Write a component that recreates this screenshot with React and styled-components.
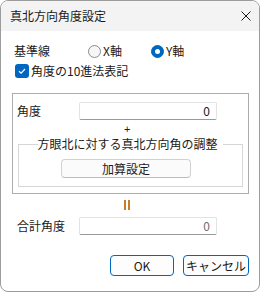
import React from "react";
import styled, { createGlobalStyle } from "styled-components";

const Global = createGlobalStyle`
  html, body { margin: 0; padding: 0; background: #ffffff; }
  body { font-family: "Noto Sans CJK JP", "Noto Sans", sans-serif; font-size: 12px; color: #1a1a1a; }
  * { box-sizing: border-box; }
`;

const Window = styled.div`
  width: 260px;
  height: 292px;
  border: 1px solid #9c9c9c;
  border-radius: 8px;
  overflow: hidden;
  display: flex;
  flex-direction: column;
  background: #ffffff;
`;

const TitleBar = styled.div`
  height: 30px;
  flex: none;
  background: #f3f3f3;
  display: flex;
  align-items: center;
  justify-content: space-between;
  padding: 0 7px 0 9px;
`;

const Title = styled.span`
  font-size: 12px;
  line-height: 14px;
  color: #1a1a1a;
`;

const CloseIcon = styled.svg`
  width: 10px;
  height: 10px;
  margin-right: 1px;
`;

const Content = styled.div`
  display: flex;
  flex-direction: column;
`;

const Row = styled.div`
  display: flex;
  align-items: center;
  height: ${(p) => p.$h || 16}px;
  margin-top: ${(p) => p.$mt || 0}px;
  padding-left: ${(p) => p.$pl || 0}px;
`;

const Label = styled.span`
  width: ${(p) => p.$w}px;
  flex: none;
  font-size: 12px;
  line-height: 14px;
`;

const RadioOption = styled.label`
  display: flex;
  align-items: center;
  gap: 2px;
  width: ${(p) => p.$w}px;
  font-size: 12px;
  line-height: 14px;
`;

const RadioCircle = styled.span`
  width: 13px;
  height: 13px;
  border-radius: 50%;
  flex: none;
  display: flex;
  align-items: center;
  justify-content: center;
  background: ${(p) => (p.$on ? "#0067c0" : "#f6f6f6")};
  border: 1px solid ${(p) => (p.$on ? "#0067c0" : "#8b8b8b")};
  &::after {
    content: "";
    display: ${(p) => (p.$on ? "block" : "none")};
    width: 5px;
    height: 5px;
    border-radius: 50%;
    background: #ffffff;
  }
`;

const CheckBox = styled.span`
  width: 14px;
  height: 14px;
  border-radius: 3px;
  background: #0067c0;
  flex: none;
  display: flex;
  align-items: center;
  justify-content: center;
  margin-right: 2px;
`;

const Group = styled.div`
  margin: 14px 10px 0 11px;
  border: 1px solid #acacac;
  padding: 8px 4px 6px 4px;
  display: flex;
  flex-direction: column;
`;

const TextBox = styled.div`
  width: 138px;
  height: 18px;
  flex: none;
  background: #ffffff;
  border: 1px solid #e3e3e3;
  border-bottom-color: #9a9a9a;
  border-radius: 2px;
  display: flex;
  align-items: center;
  justify-content: flex-end;
  padding-right: 6px;
  font-size: 12px;
  line-height: 14px;
  color: ${(p) => (p.$muted ? "#6e6e6e" : "#1a1a1a")};
`;

const Plus = styled.div`
  margin-top: 3px;
  height: 12px;
  line-height: 12px;
  font-family: "Liberation Sans", Arial, sans-serif;
  font-size: 11px;
  padding-left: 107px;
  color: #1a1a1a;
`;

const Fieldset = styled.fieldset`
  margin: 2px 1px 0 1px;
  padding: 0 0 8px 0;
  border: 1px solid #d6d6d6;
  min-width: 0;
  display: flex;
  flex-direction: column;
`;

const Legend = styled.legend`
  margin: 0 auto;
  padding: 0 2px;
  font-size: 12px;
  line-height: 14px;
  position: relative;
  left: -3px;
`;

const PlainButton = styled.div`
  margin: 8px 0 0 42px;
  width: 130px;
  height: 19px;
  border: 1px solid #d2d2d2;
  border-bottom-color: #bcbcbc;
  border-radius: 4px;
  background: #fbfbfb;
  display: flex;
  align-items: center;
  justify-content: center;
  font-size: 12px;
  line-height: 14px;
`;

const EqualsRow = styled.div`
  height: 10px;
  margin-top: 6px;
  padding-left: 123px;
  display: flex;
`;

const VEquals = styled.span`
  width: 6px;
  height: 10px;
  border-left: 2px solid #c97d28;
  border-right: 2px solid #c97d28;
`;

const ButtonBar = styled.div`
  display: flex;
  justify-content: flex-end;
  gap: 9px;
  padding-right: 10px;
  margin-top: 20px;
`;

const DialogButton = styled.div`
  width: ${(p) => p.$w}px;
  height: 21px;
  border: 1px solid #0067c0;
  border-radius: 4px;
  background: #fdfdfd;
  display: flex;
  align-items: center;
  justify-content: center;
  font-size: 12px;
  line-height: 14px;
  color: #1a1a1a;
`;

export default function App() {
  return (
    <>
      <Global />
      <Window>
        <TitleBar>
          <Title>真北方向角度設定</Title>
          <CloseIcon viewBox="0 0 10 10">
            <path d="M0.5 0.5 L9.5 9.5 M9.5 0.5 L0.5 9.5" stroke="#1a1a1a" strokeWidth="1" />
          </CloseIcon>
        </TitleBar>
        <Content>
          <Row $mt={12} $pl={13}>
            <Label $w={74}>基準線</Label>
            <RadioOption $w={63}>
              <RadioCircle />
              X軸
            </RadioOption>
            <RadioOption $w={40}>
              <RadioCircle $on />
              Y軸
            </RadioOption>
          </Row>
          <Row $mt={4} $pl={14}>
            <CheckBox>
              <svg width="10" height="10" viewBox="0 0 10 10">
                <path d="M2 5.2 L4.1 7.2 L8 3" fill="none" stroke="#ffffff" strokeWidth="1.2" />
              </svg>
            </CheckBox>
            <Label>角度の10進法表記</Label>
          </Row>
          <Group>
            <Row $h={18}>
              <Label $w={62}>角度</Label>
              <TextBox>0</TextBox>
            </Row>
            <Plus>+</Plus>
            <Fieldset>
              <Legend>方眼北に対する真北方向角の調整</Legend>
              <PlainButton>加算設定</PlainButton>
            </Fieldset>
          </Group>
          <EqualsRow>
            <VEquals />
          </EqualsRow>
          <Row $h={18} $mt={7} $pl={16}>
            <Label $w={62}>合計角度</Label>
            <TextBox $muted>0</TextBox>
          </Row>
          <ButtonBar>
            <DialogButton $w={64}>OK</DialogButton>
            <DialogButton $w={66}>キャンセル</DialogButton>
          </ButtonBar>
        </Content>
      </Window>
    </>
  );
}
